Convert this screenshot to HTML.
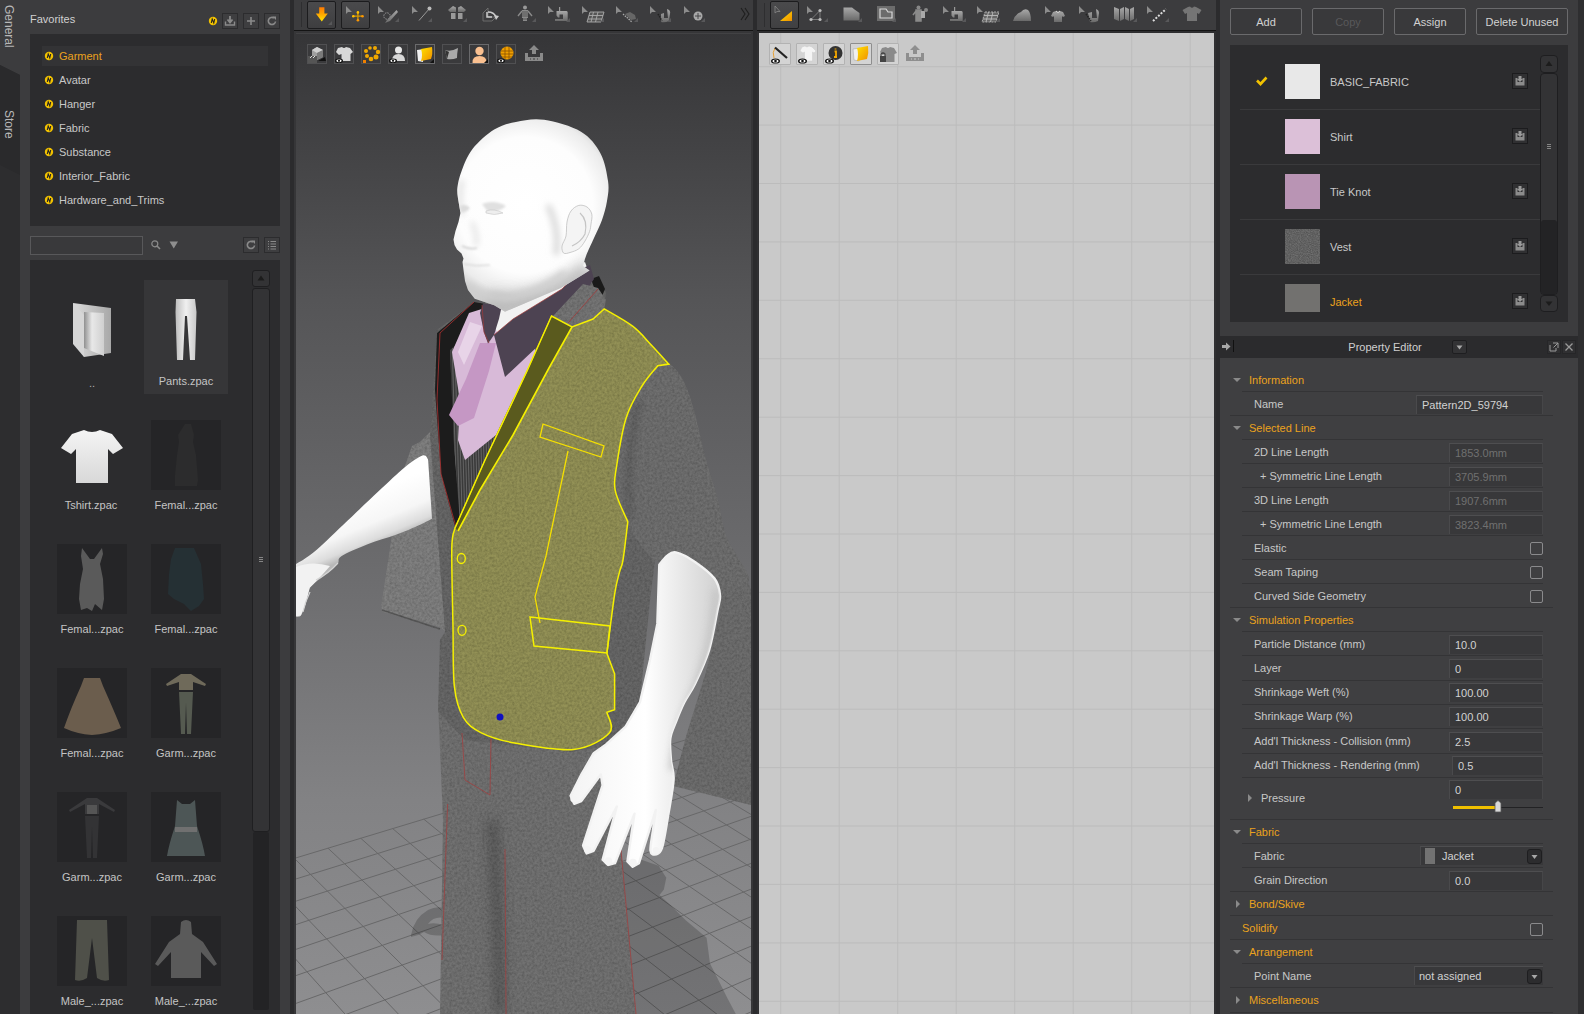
<!DOCTYPE html>
<html><head><meta charset="utf-8">
<style>
*{margin:0;padding:0;box-sizing:border-box}
html,body{width:1584px;height:1014px;overflow:hidden;background:#2e2e30;font-family:"Liberation Sans",sans-serif;font-size:11px;color:#cfcfcf}
.a{position:absolute}
.t{position:absolute;white-space:nowrap;line-height:13px}
svg{position:absolute;overflow:visible}
</style></head><body>
<div class="a" style="left:0px;top:0px;width:20px;height:1014px;background:#2d2d2f"></div>
<div class="a" style="left:20px;top:0px;width:270px;height:1014px;background:#3c3c3e"></div>
<div class="a" style="left:290px;top:0px;width:4px;height:1014px;background:#2b2b2d"></div>
<div class="a" style="left:294px;top:0px;width:459px;height:30px;background:#3c3c3e"></div>
<div class="a" style="left:294px;top:30px;width:459px;height:1px;background:#141414"></div>
<div class="a" style="left:294px;top:31px;width:459px;height:983px;background:#363638"></div>
<div class="a" style="left:753px;top:0px;width:4px;height:1014px;background:#2b2b2d"></div>
<div class="a" style="left:757px;top:0px;width:459px;height:30px;background:#3c3c3e"></div>
<div class="a" style="left:757px;top:30px;width:459px;height:1px;background:#141414"></div>
<div class="a" style="left:757px;top:33px;width:459px;height:981px;background:#303032"></div>
<div class="a" style="left:759px;top:33px;width:455px;height:981px;background:#c9c9c9"></div>
<div class="a" style="left:1216px;top:0px;width:4px;height:1014px;background:#2b2b2d"></div>
<div class="a" style="left:1220px;top:0px;width:364px;height:1014px;background:#3c3c3e"></div>
<svg style="left:0;top:0" width="20" height="1014"><polygon points="0,0 20,0 20,75 0,65" fill="#3c3c3e"/><polygon points="0,65 20,75 20,175 0,165" fill="#2a2a2c"/></svg>
<div class="t" style="left:2px;top:5px;color:#b8b8b8;font-size:12px;line-height:14px;writing-mode:vertical-rl">General</div>
<div class="t" style="left:2px;top:110px;color:#b8b8b8;font-size:12px;line-height:14px;writing-mode:vertical-rl">Store</div>
<div class="t" style="left:30px;top:13px;color:#d0d0d0;font-size:11px;">Favorites</div>
<svg style="left:208px;top:16px" width="10" height="10"><circle cx="5" cy="5" r="4.2" fill="#f2c200"/><path d="M3.3 7 L4.2 3 L5.8 7 L6.7 3" stroke="#222" stroke-width="1.1" fill="none"/></svg>
<div class="a" style="left:222px;top:13px;width:16px;height:16px;border:1px solid #2c2c2e;background:#3e3e40"></div>
<svg style="left:222px;top:13px" width="16" height="16"><path d="M8 3 V9 M5.5 6.5 L8 9.5 L10.5 6.5" stroke="#8a8a8a" stroke-width="1.8" fill="none"/><path d="M3.5 8.5 V12 H12.5 V8.5" stroke="#8a8a8a" stroke-width="1.4" fill="none"/></svg>
<div class="a" style="left:243px;top:13px;width:16px;height:16px;border:1px solid #2c2c2e;background:#3e3e40"></div>
<svg style="left:243px;top:13px" width="16" height="16"><path d="M8 4 V12 M4 8 H12" stroke="#8a8a8a" stroke-width="1.6"/></svg>
<div class="a" style="left:264px;top:13px;width:16px;height:16px;border:1px solid #2c2c2e;background:#3e3e40"></div>
<svg style="left:264px;top:13px" width="16" height="16"><path d="M11.5 8.5 A3.6 3.6 0 1 1 10 5" stroke="#8a8a8a" stroke-width="1.6" fill="none"/><path d="M8.5 3.5 L12 3.5 L12 7 Z" fill="#8a8a8a"/></svg>
<div class="a" style="left:30px;top:34px;width:250px;height:192px;background:#2c2c2e"></div>
<div class="a" style="left:42px;top:46px;width:226px;height:20px;background:#333335"></div>
<svg style="left:44px;top:51px" width="10" height="10"><circle cx="5" cy="5" r="4.2" fill="#f2c200"/><path d="M3.3 7 L4.2 3 L5.8 7 L6.7 3" stroke="#222" stroke-width="1.1" fill="none"/></svg>
<div class="t" style="left:59px;top:50px;color:#eba21d;font-size:11px;">Garment</div>
<svg style="left:44px;top:75px" width="10" height="10"><circle cx="5" cy="5" r="4.2" fill="#f2c200"/><path d="M3.3 7 L4.2 3 L5.8 7 L6.7 3" stroke="#222" stroke-width="1.1" fill="none"/></svg>
<div class="t" style="left:59px;top:74px;color:#c8c8c8;font-size:11px;">Avatar</div>
<svg style="left:44px;top:99px" width="10" height="10"><circle cx="5" cy="5" r="4.2" fill="#f2c200"/><path d="M3.3 7 L4.2 3 L5.8 7 L6.7 3" stroke="#222" stroke-width="1.1" fill="none"/></svg>
<div class="t" style="left:59px;top:98px;color:#c8c8c8;font-size:11px;">Hanger</div>
<svg style="left:44px;top:123px" width="10" height="10"><circle cx="5" cy="5" r="4.2" fill="#f2c200"/><path d="M3.3 7 L4.2 3 L5.8 7 L6.7 3" stroke="#222" stroke-width="1.1" fill="none"/></svg>
<div class="t" style="left:59px;top:122px;color:#c8c8c8;font-size:11px;">Fabric</div>
<svg style="left:44px;top:147px" width="10" height="10"><circle cx="5" cy="5" r="4.2" fill="#f2c200"/><path d="M3.3 7 L4.2 3 L5.8 7 L6.7 3" stroke="#222" stroke-width="1.1" fill="none"/></svg>
<div class="t" style="left:59px;top:146px;color:#c8c8c8;font-size:11px;">Substance</div>
<svg style="left:44px;top:171px" width="10" height="10"><circle cx="5" cy="5" r="4.2" fill="#f2c200"/><path d="M3.3 7 L4.2 3 L5.8 7 L6.7 3" stroke="#222" stroke-width="1.1" fill="none"/></svg>
<div class="t" style="left:59px;top:170px;color:#c8c8c8;font-size:11px;">Interior_Fabric</div>
<svg style="left:44px;top:195px" width="10" height="10"><circle cx="5" cy="5" r="4.2" fill="#f2c200"/><path d="M3.3 7 L4.2 3 L5.8 7 L6.7 3" stroke="#222" stroke-width="1.1" fill="none"/></svg>
<div class="t" style="left:59px;top:194px;color:#c8c8c8;font-size:11px;">Hardware_and_Trims</div>
<div class="a" style="left:30px;top:236px;width:113px;height:19px;background:#39393b;border:1px solid #58585a"></div>
<svg style="left:150px;top:239px" width="12" height="12"><circle cx="4.8" cy="4.8" r="3" stroke="#8a8a8a" stroke-width="1.2" fill="none"/><path d="M7 7 L10 10" stroke="#8a8a8a" stroke-width="1.6"/></svg>
<svg style="left:169px;top:240px" width="10" height="10"><polygon points="0.5,1.5 9,1.5 4.75,8.5" fill="#8e8e8e"/></svg>
<div class="a" style="left:243px;top:237px;width:16px;height:16px;border:1px solid #2c2c2e;background:#3e3e40"></div>
<svg style="left:243px;top:237px" width="16" height="16"><path d="M11.5 8.5 A3.6 3.6 0 1 1 10 5" stroke="#8a8a8a" stroke-width="1.6" fill="none"/><path d="M8.5 3.5 L12 3.5 L12 7 Z" fill="#8a8a8a"/></svg>
<div class="a" style="left:264px;top:237px;width:16px;height:16px;border:1px solid #2c2c2e;background:#3e3e40"></div>
<svg style="left:264px;top:237px" width="16" height="16"><path d="M4 4.5 H5 M6.5 4.5 H12 M4 7 H5 M6.5 7 H12 M4 9.5 H5 M6.5 9.5 H12 M4 12 H5 M6.5 12 H12" stroke="#8a8a8a" stroke-width="1.2"/></svg>
<div class="a" style="left:30px;top:260px;width:250px;height:754px;background:#2c2c2e"></div>
<div class="a" style="left:252px;top:270px;width:18px;height:17px;border:1px solid #1f1f21;border-radius:3px;background:#333335"></div>
<svg style="left:252px;top:270px" width="18" height="17"><polygon points="5.5,10.5 12.5,10.5 9,5.5" fill="#1c1c1c"/></svg>
<div class="a" style="left:252px;top:288px;width:18px;height:544px;border:1px solid #1f1f21;border-radius:3px;background:#333335"></div>
<div class="a" style="left:253px;top:832px;width:16px;height:178px;background:#232325;border-radius:2px"></div>
<svg style="left:252px;top:555px" width="18" height="10"><path d="M7 2.5 H11 M7 4.5 H11 M7 6.5 H11" stroke="#9a9a9a" stroke-width="0.8"/></svg>
<div class="a" style="left:144px;top:280px;width:84px;height:114px;background:#363638"></div>
<svg style="left:60px;top:296px" width="60" height="70">
<defs><linearGradient id="fg1" x1="0" x2="1"><stop offset="0" stop-color="#dcdcdc"/><stop offset="1" stop-color="#a8a8a8"/></linearGradient>
<linearGradient id="fg2" x1="0" x2="1"><stop offset="0" stop-color="#909090"/><stop offset="0.4" stop-color="#e8e8e8"/><stop offset="1" stop-color="#cfcfcf"/></linearGradient></defs>
<polygon points="13,7 51,12 51,57 24,61" fill="url(#fg1)"/>
<polygon points="24,16 44,17 44,60 24,52" fill="url(#fg2)"/>
<polygon points="13,7 24,19 24,61 13,48" fill="#d6d6d6"/>
</svg>
<div class="t" style="left:89px;top:377px;color:#b0b0b0;font-size:11px">..</div>
<svg style="left:174px;top:298px" width="24" height="66">
<defs><linearGradient id="pg" x1="0" x2="1"><stop offset="0" stop-color="#bdbdbd"/><stop offset="0.5" stop-color="#f0f0f0"/><stop offset="1" stop-color="#c8c8c8"/></linearGradient></defs>
<path d="M2 1 H21 L22.5 14 L21 62 H16 L13 18 H11 L9 62 H3 L1.5 14 Z" fill="url(#pg)"/></svg>
<div class="t" style="left:136.0px;top:375px;width:100px;text-align:center;color:#c4c4c4;font-size:11px;">Pants.zpac</div>
<svg style="left:60px;top:428px" width="64" height="56">
<defs><linearGradient id="tg" x1="0" x2="0" y1="0" y2="1"><stop offset="0" stop-color="#f4f4f4"/><stop offset="1" stop-color="#d8d8d8"/></linearGradient></defs>
<path d="M24 2 Q32 6 40 2 L52 6 L63 20 L53 26 L48 21 L48 55 H16 L16 21 L11 26 L1 20 L12 6 Z" fill="url(#tg)"/></svg>
<div class="t" style="left:41.0px;top:499px;width:100px;text-align:center;color:#c4c4c4;font-size:11px;">Tshirt.zpac</div>
<svg style="left:151px;top:420px" width="70" height="70"><rect width="70" height="70" fill="#252527"/><polygon points="34,4 40,4 43,15 42,22 45,35 47,60 46,66 24,66 24,55 26,35 28,22 27,15" fill="#2c2c2d"/></svg>
<div class="t" style="left:136.0px;top:499px;width:100px;text-align:center;color:#c4c4c4;font-size:11px;">Femal...zpac</div>
<svg style="left:57px;top:544px" width="70" height="70"><rect width="70" height="70" fill="#252527"/><polygon points="25,4 33,15 37,15 45,4 46,10 43,20 46,35 47,55 45,66 38,60 35,67 30,64 24,66 22,55 23,40 26,25 24,12" fill="#5a5a5a"/></svg>
<div class="t" style="left:42.0px;top:623px;width:100px;text-align:center;color:#c4c4c4;font-size:11px;">Femal...zpac</div>
<svg style="left:151px;top:544px" width="70" height="70"><rect width="70" height="70" fill="#252527"/><polygon points="24,4 43,4 50,20 52,40 53,55 48,62 40,67 33,60 23,55 17,50 18,30 20,15" fill="#253034"/></svg>
<div class="t" style="left:136.0px;top:623px;width:100px;text-align:center;color:#c4c4c4;font-size:11px;">Femal...zpac</div>
<svg style="left:57px;top:668px" width="70" height="70"><rect width="70" height="70" fill="#252527"/><path d="M27 10 H43 L46 18 Q58 45 64 60 Q50 66 35 67 Q20 66 7 60 Q14 40 24 18 Z" fill="#6b5d4d"/></svg>
<div class="t" style="left:42.0px;top:747px;width:100px;text-align:center;color:#c4c4c4;font-size:11px;">Femal...zpac</div>
<svg style="left:151px;top:668px" width="70" height="70"><rect width="70" height="70" fill="#252527"/><path d="M30 6 H40 L55 16 L54 18 L42 14 V22 H28 V14 L16 18 L15 16 Z" fill="#6f6a5a"/><path d="M28 24 H42 L40 66 H36 L35 35 L34 66 H30 Z" fill="#555a50"/></svg>
<div class="t" style="left:136.0px;top:747px;width:100px;text-align:center;color:#c4c4c4;font-size:11px;">Garm...zpac</div>
<svg style="left:57px;top:792px" width="70" height="70"><rect width="70" height="70" fill="#252527"/><path d="M30 6 H40 L58 18 L57 20 L42 12 V22 H28 V12 L13 20 L12 18 Z" fill="#3a3a3c"/><path d="M30 13 H40 V22 H30 Z" fill="#555"/><path d="M28 24 H42 L40 66 H36 L35 35 L34 66 H30 Z" fill="#333335"/></svg>
<div class="t" style="left:42.0px;top:871px;width:100px;text-align:center;color:#c4c4c4;font-size:11px;">Garm...zpac</div>
<svg style="left:151px;top:792px" width="70" height="70"><rect width="70" height="70" fill="#252527"/><path d="M26 8 L31 12 H39 L44 8 L46 34 Q52 52 54 64 H16 Q18 52 24 34 Z" fill="#4d5656"/><rect x="24" y="35" width="22" height="5" fill="#707070"/></svg>
<div class="t" style="left:136.0px;top:871px;width:100px;text-align:center;color:#c4c4c4;font-size:11px;">Garm...zpac</div>
<svg style="left:57px;top:916px" width="70" height="70"><rect width="70" height="70" fill="#252527"/><path d="M20 4 H50 L52 64 Q46 66 40 62 L35 22 L30 62 Q24 66 18 64 Z" fill="#4f5049"/></svg>
<div class="t" style="left:42.0px;top:995px;width:100px;text-align:center;color:#c4c4c4;font-size:11px;">Male_...zpac</div>
<svg style="left:151px;top:916px" width="70" height="70"><rect width="70" height="70" fill="#252527"/><path d="M30 6 Q35 2 40 6 L41 18 L52 26 L66 48 L63 50 L50 36 L50 62 H20 L20 36 L7 50 L4 48 L18 26 L29 18 Z" fill="#5a5a5a"/></svg>
<div class="t" style="left:136.0px;top:995px;width:100px;text-align:center;color:#c4c4c4;font-size:11px;">Male_...zpac</div>
<svg style="left:294px;top:31px" width="459" height="983" viewBox="294 31 459 983"><defs><linearGradient id="vbg" x1="0" y1="31" x2="0" y2="1014" gradientUnits="userSpaceOnUse"><stop offset="0" stop-color="#353537"/><stop offset="0.274" stop-color="#555557"/><stop offset="0.528" stop-color="#6a6a6c"/><stop offset="0.782" stop-color="#828284"/><stop offset="1" stop-color="#8e8e90"/></linearGradient><radialGradient id="skin" cx="0.45" cy="0.35" r="0.7"><stop offset="0" stop-color="#ffffff"/><stop offset="0.6" stop-color="#f2f2f2"/><stop offset="1" stop-color="#c8c8c8"/></radialGradient><linearGradient id="armL" x1="0" y1="0" x2="0.3" y2="1"><stop offset="0" stop-color="#ffffff"/><stop offset="0.6" stop-color="#f0f0f0"/><stop offset="1" stop-color="#bdbdbd"/></linearGradient><linearGradient id="armR" x1="0" y1="0" x2="1" y2="0"><stop offset="0" stop-color="#f4f4f4"/><stop offset="0.5" stop-color="#ffffff"/><stop offset="1" stop-color="#d0d0d0"/></linearGradient><filter id="noise" x="0" y="0" width="100%" height="100%"><feTurbulence type="fractalNoise" baseFrequency="0.9" numOctaves="2" seed="3"/><feColorMatrix type="matrix" values="0 0 0 0 0  0 0 0 0 0  0 0 0 0 0  0 0 0 -1.6 1.1"/><feComposite operator="in" in2="SourceGraphic"/></filter><clipPath id="vpclip"><rect x="296" y="33" width="455" height="981"/></clipPath><filter id="fab" x="294" y="31" width="459" height="983" filterUnits="userSpaceOnUse"><feTurbulence type="fractalNoise" baseFrequency="0.4" numOctaves="3" seed="5" result="n"/><feColorMatrix in="n" type="matrix" values="0 0 0 0 0  0 0 0 0 0  0 0 0 0 0  0 0 0 0.6 -0.18" result="na"/><feComposite in="na" in2="SourceGraphic" operator="in" result="nc"/><feMerge><feMergeNode in="SourceGraphic"/><feMergeNode in="nc"/></feMerge></filter></defs><g clip-path="url(#vpclip)"><rect x="294" y="31" width="459" height="983" fill="url(#vbg)"/><rect x="296" y="33" width="455" height="1" fill="#424244"/><path d="M-147.1 992.1L352.6 2258.4M-100.6 978.1L441.5 2180.0M-55.6 964.4L524.1 2107.1M-12.0 951.2L601.2 2039.2M30.3 938.4L673.2 1975.7M71.4 925.9L740.6 1916.2M111.3 913.9L803.9 1860.4M150.0 902.1L863.4 1807.9M187.6 890.7L919.5 1758.4M224.2 879.7L972.4 1711.7M259.8 868.9L1022.4 1667.6M294.4 858.4L1069.8 1625.9M328.0 848.2L1114.7 1586.3M360.8 838.3L1157.3 1548.7M392.7 828.6L1197.9 1512.9M423.8 819.2L1236.4 1478.9M454.1 810.0L1273.2 1446.5M483.6 801.1L1308.3 1415.5M512.4 792.4L1341.8 1386.0M540.5 783.8L1373.8 1357.7M567.9 775.5L1404.5 1330.7M594.7 767.4L1433.8 1304.8M620.8 759.5L1462.0 1280.0M646.3 751.8L1489.0 1256.1M671.2 744.3L1514.9 1233.2M695.6 736.9L1539.9 1211.3M719.4 729.7L1563.9 1190.1M742.7 722.6L1587.0 1169.7M765.4 715.7L1609.2 1150.1M787.7 709.0L1630.7 1131.2M809.4 702.4L1651.4 1112.9M830.8 695.9L1671.3 1095.3M851.6 689.6L1690.6 1078.3M872.0 683.4L1709.3 1061.9M892.0 677.4L1727.3 1046.0M911.6 671.4L1744.7 1030.6M930.8 665.6L1761.6 1015.7M949.6 659.9L1778.0 1001.3M968.0 654.4L1793.8 987.3M986.1 648.9L1809.2 973.7M1003.8 643.5L1824.1 960.6M1021.2 638.3L1838.5 947.9M-147.1 992.1L1038.2 633.1M-138.4 1014.2L1059.9 641.1M-129.3 1037.3L1082.2 649.4M-119.7 1061.5L1105.1 657.9M-109.7 1087.0L1128.7 666.7M-99.1 1113.8L1153.0 675.7M-88.0 1142.0L1178.0 685.0M-76.2 1171.8L1203.8 694.6M-63.8 1203.2L1230.4 704.4M-50.7 1236.5L1257.8 714.6M-36.7 1271.7L1286.1 725.1M-22.0 1309.2L1315.3 736.0M-6.3 1349.0L1345.4 747.2M10.5 1391.4L1376.6 758.7M28.4 1436.7L1408.8 770.7M47.5 1485.2L1442.2 783.1M68.0 1537.2L1476.7 795.9M90.1 1593.1L1512.5 809.2M113.9 1653.4L1549.6 823.0M139.6 1718.7L1588.0 837.2M167.6 1789.5L1627.9 852.1M198.0 1866.6L1669.4 867.5M231.3 1950.9L1712.5 883.5M267.8 2043.4L1757.3 900.1M308.0 2145.4L1803.9 917.4M352.6 2258.4L1852.6 935.5" stroke="#686869" stroke-width="1" fill="none"/><path d="M411 935 Q414 918 428 910 Q436 906 444 908 L444 918 Q434 916 428 924 Q434 922 444 925 L444 935 Q432 937 424 932 Q418 936 411 937 Z" fill="rgba(0,0,0,0.19)"/><path d="M621.7 862.3 L641.5 859.7 L658.6 865.7 L666.3 877.7 L663.8 889.7 L659.5 894.9 L670.6 905.2 L686 920.6 L706.6 937.8 L710 963.5 L717 977.2 L727.2 997.8 L735.8 1014 L636 1014 Z" fill="rgba(0,0,0,0.19)"/><g filter="url(#fab)"><path d="M700 566 L745 574 L751 590 L751 805 L673 786 L687 733 L706 672 L720 612 L716 585 Z" fill="#6e6e6e"/><path d="M412 446 L420 442 L432 430 L446 440 L446 632 L440 627 L383 612 L381 607 L392 535 L400 480 Z" fill="#808080"/><path d="M382 610 L440 629" stroke="#5a5a5a" stroke-width="1.5"/><path d="M438 700 L617 712 L621 848 L636 1014 L440 1014 L443 820 Z" fill="#727272"/><path d="M492 820 Q498 900 500 1014" stroke="#3a3a3a" stroke-width="10" fill="none" filter="url(#blur6)" opacity="0.5"/><path d="M430 436 L437 330 L474 302 L485 303 L562 288 L585 282 L594 282 L606 292 L604 309 L633 326 L652 345 L669 364 L655 368 L636 392 L621 437 L617 465 L617 493 L626 522 L655 560 L650 600 L640 700 L630 735 L614 745 L570 752 L465 740 L438 712 L440 640 L445 632 Z" fill="#686868"/><path d="M669.0 364.0C673.7 366.0 678.8 372.3 683.0 380.0C687.2 387.7 690.3 397.3 694.0 410.0C697.7 422.7 701.0 441.0 705.0 456.0C709.0 471.0 714.3 486.3 718.0 500.0C721.7 513.7 721.8 524.7 727.0 538.0C732.2 551.3 750.2 572.2 749.0 580.0C747.8 587.8 729.8 588.0 720.0 585.0C710.2 582.0 700.8 566.2 690.0 562.0C679.2 557.8 665.7 566.7 655.0 560.0C644.3 553.3 632.3 533.2 626.0 522.0C619.7 510.8 618.5 502.5 617.0 493.0C615.5 483.5 616.3 474.3 617.0 465.0C617.7 455.7 617.8 449.2 621.0 437.0C624.2 424.8 630.3 403.5 636.0 392.0C641.7 380.5 649.5 372.7 655.0 368.0C660.5 363.3 664.3 362.0 669.0 364.0Z" fill="#707070"/><path d="M640 400 Q625 450 630 520" stroke="#5a5a5a" stroke-width="8" fill="none" filter="url(#blur3)" opacity="0.6"/></g><path d="M462 733 L465 780 L490 795 L491 738 M447.6 804 L442 960 M505 849 L506 1014 M621 850 L636 1014" stroke="#a04040" stroke-width="0.8" fill="none"/><path d="M591 279 L599 276 L605 289 L602 296 L596 293 Z" fill="#1a1a1a"/><path d="M437 333 L474 302 L486 304 L462 332 L452 352 L454 446 L461 520 L456 530 L441 474 L435 390 Z" fill="#1c1c1c"/><path d="M474 302 L440 333 L437 400 L441 474 L456 527" stroke="#b03030" stroke-width="0.8" fill="none"/><clipPath id="stripeclip"><path d="M450 350 L462 340 L466 460 L513 399 L485 460 L460 523 L454 446 Z"/></clipPath><path d="M450 350 L462 340 L466 460 L513 399 L485 460 L460 523 L454 446 Z" fill="#3a3a3a"/><path d="M447.0 345L452.0 525M449.6 345L454.6 525M452.2 345L457.2 525M454.8 345L459.8 525M457.4 345L462.4 525M460.0 345L465.0 525M462.6 345L467.6 525M465.2 345L470.2 525M467.8 345L472.8 525M470.4 345L475.4 525M473.0 345L478.0 525M475.6 345L480.6 525M478.2 345L483.2 525M480.8 345L485.8 525M483.4 345L488.4 525M486.0 345L491.0 525M488.6 345L493.6 525M491.2 345L496.2 525M493.8 345L498.8 525M496.4 345L501.4 525M499.0 345L504.0 525M501.6 345L506.6 525M504.2 345L509.2 525M506.8 345L511.8 525M509.4 345L514.4 525M512.0 345L517.0 525" stroke="#9a9a9a" stroke-width="0.6" opacity="0.75" clip-path="url(#stripeclip)"/><path d="M452 352 L469 313 L485 308 L494 327 L535 349 L538 357 L513 399 L496 435 L465 460 L458 440 L460 400 Z" fill="#d8bad8"/><path d="M458 352 L470 322 L482 326 L464 365 Z" fill="#e8d4e8"/><path d="M480 343 L496 343 L489 371 L474 418 L458 426 L449 415 L466 379 Z" fill="#c597c4"/><path d="M495 300 L585 262 L592 282 L560 300 L520 330 L500 340 L492 320 Z" fill="#f2f2f2"/><path d="M483 303.5 L502 305 L499 318.7 L494 335 L488 343.5 L484 332.5 L480 313 Z" fill="#4d4352"/><path d="M482 305 L484 332 L489 343" stroke="#a03838" stroke-width="0.7" fill="none"/><path d="M494 335 L513 319 L562 289 L583 268 L590 265 L594 279 L588 288 L555 315 L538 346 L505 377 Z" fill="#4d4352"/><path d="M553 316 L583 284 L598 288 L606 300 L604 309 L593 319 L572 327 Z" fill="#767676" filter="url(#fab)"/><path d="M568 323 L598 289" stroke="#a03838" stroke-width="0.8"/><path d="M494 335 L513 319 L562 289 L583 268" stroke="#a03838" stroke-width="0.7" fill="none"/><g filter="url(#fab)"><path d="M551.5 316 L572 327 L593 319 L604.2 308.9 C608.9 311.8 624.7 320.1 632.6 326.2C640.5 332.2 645.5 338.9 651.5 345.2C657.5 351.5 665.9 361.0 668.8 364.1 L657.8 365.7 C655.2 369.1 647.3 377.3 642.0 386.0C636.7 394.7 630.4 404.5 626.2 417.7C622.0 430.9 618.6 452.9 616.8 465.0C615.0 477.1 613.4 480.8 615.2 490.3C617.0 499.8 625.7 516.5 627.8 521.8 C627.0 528.2 624.4 551.8 623.0 560.0C621.6 568.2 621.1 565.6 619.7 571.3C618.3 577.0 616.7 580.7 614.6 594.4C612.5 608.1 608.2 643.5 606.9 653.3 L614.6 673.8 L614.6 709.7 L606.9 712.3 C607.3 715.7 615.0 726.6 609.5 732.8C604.0 739.0 589.4 747.8 573.6 749.5C557.8 751.2 530.0 745.8 514.6 743.0C499.2 740.2 489.9 737.1 481.3 732.8C472.8 728.5 467.8 725.1 463.3 717.4C458.8 709.7 456.1 701.7 454.4 686.7C452.7 671.8 453.4 650.8 453.0 627.7C452.6 604.6 451.5 564.8 451.8 548.2C452.1 531.6 454.5 531.4 455.0 528.0 L485 460 L527 371 Z" fill="#939157"/></g><path d="M551.5 316 L572 327 L549 368 L513 435 L480 490 L458 531 L455 528 L485 460 L527 371 Z" fill="#5a5a1e"/><path d="M551.5 316 L527 371 L485 460 L455 528" stroke="#d8d000" stroke-width="0.8" fill="none"/><path d="M572 327 L549 368 L513 435 L480 490 L458 531" stroke="#f5f000" stroke-width="1.6" fill="none"/><path d="M551.5 316 L572 327 L593 319 L604.2 308.9 C608.9 311.8 624.7 320.1 632.6 326.2C640.5 332.2 645.5 338.9 651.5 345.2C657.5 351.5 665.9 361.0 668.8 364.1 L657.8 365.7 C655.2 369.1 647.3 377.3 642.0 386.0C636.7 394.7 630.4 404.5 626.2 417.7C622.0 430.9 618.6 452.9 616.8 465.0C615.0 477.1 613.4 480.8 615.2 490.3C617.0 499.8 625.7 516.5 627.8 521.8 C627.0 528.2 624.4 551.8 623.0 560.0C621.6 568.2 621.1 565.6 619.7 571.3C618.3 577.0 616.7 580.7 614.6 594.4C612.5 608.1 608.2 643.5 606.9 653.3 L614.6 673.8 L614.6 709.7 L606.9 712.3 C607.3 715.7 615.0 726.6 609.5 732.8C604.0 739.0 589.4 747.8 573.6 749.5C557.8 751.2 530.0 745.8 514.6 743.0C499.2 740.2 489.9 737.1 481.3 732.8C472.8 728.5 467.8 725.1 463.3 717.4C458.8 709.7 456.1 701.7 454.4 686.7C452.7 671.8 453.4 650.8 453.0 627.7C452.6 604.6 451.5 564.8 451.8 548.2C452.1 531.6 454.5 531.4 455.0 528.0 L485 460 L527 371 Z" stroke="#f5f000" stroke-width="1.5" fill="none"/><path d="M543 424 L604 446 L601 457 L540 437 Z" stroke="#f5e000" stroke-width="1.3" fill="none"/><path d="M568 451 L546 556 L535 597 L540 623" stroke="#f5e000" stroke-width="1.3" fill="none"/><path d="M530 617 L610 626 L607 653 L534 646 Z" stroke="#f5f000" stroke-width="1.5" fill="none"/><ellipse cx="461.3" cy="558.5" rx="4" ry="5" stroke="#f5f000" stroke-width="1.3" fill="none"/><ellipse cx="462" cy="630.3" rx="4" ry="5" stroke="#f5f000" stroke-width="1.3" fill="none"/><circle cx="500" cy="717" r="3.5" fill="#1010c0"/><radialGradient id="headg" gradientUnits="userSpaceOnUse" cx="525" cy="205" r="100"><stop offset="0" stop-color="#ffffff"/><stop offset="0.68" stop-color="#fdfdfd"/><stop offset="0.88" stop-color="#ececec"/><stop offset="1" stop-color="#cfcfcf"/></radialGradient><filter id="blur3" filterUnits="userSpaceOnUse" x="294" y="31" width="459" height="983"><feGaussianBlur stdDeviation="3"/></filter><filter id="blur6" filterUnits="userSpaceOnUse" x="294" y="31" width="459" height="983"><feGaussianBlur stdDeviation="6"/></filter><clipPath id="headclip"><path d="M458.4 201.1C458.2 198.9 456.8 193.2 457.4 188.1C457.9 183.0 459.2 177.2 461.7 170.7C464.2 164.2 467.1 155.9 472.5 149.0C477.9 142.1 487.0 134.0 494.2 129.5C501.4 125.0 507.6 123.5 515.9 121.9C524.2 120.3 533.2 118.2 544.1 119.8C555.0 121.4 571.6 126.1 581.0 131.7C590.4 137.3 596.0 145.1 600.5 153.4C605.0 161.7 607.0 173.7 608.1 181.6C609.2 189.5 608.0 194.6 607.0 201.0C606.0 207.4 604.2 213.8 602.0 220.0C599.8 226.2 596.7 232.0 594.0 238.0C591.3 244.0 587.8 251.3 586.0 256.0C584.2 260.7 583.6 264.4 583.1 266.1L589.6 270.5L561.4 287.8L505.0 311.7L494.2 305.2L474.7 298.7L468.0 290.0L465.0 281.0L463.5 270.0L462.5 262.0L463.5 258.5L461.5 253.5L457.0 249.5L454.5 245.0L453.5 239.5L455.5 231.0L458.5 222.0L460.5 213.0L458.4 201.1Z"/></clipPath><path d="M458.4 201.1C458.2 198.9 456.8 193.2 457.4 188.1C457.9 183.0 459.2 177.2 461.7 170.7C464.2 164.2 467.1 155.9 472.5 149.0C477.9 142.1 487.0 134.0 494.2 129.5C501.4 125.0 507.6 123.5 515.9 121.9C524.2 120.3 533.2 118.2 544.1 119.8C555.0 121.4 571.6 126.1 581.0 131.7C590.4 137.3 596.0 145.1 600.5 153.4C605.0 161.7 607.0 173.7 608.1 181.6C609.2 189.5 608.0 194.6 607.0 201.0C606.0 207.4 604.2 213.8 602.0 220.0C599.8 226.2 596.7 232.0 594.0 238.0C591.3 244.0 587.8 251.3 586.0 256.0C584.2 260.7 583.6 264.4 583.1 266.1L589.6 270.5L561.4 287.8L505.0 311.7L494.2 305.2L474.7 298.7L468.0 290.0L465.0 281.0L463.5 270.0L462.5 262.0L463.5 258.5L461.5 253.5L457.0 249.5L454.5 245.0L453.5 239.5L455.5 231.0L458.5 222.0L460.5 213.0L458.4 201.1Z" fill="url(#headg)"/><g clip-path="url(#headclip)"><path d="M490 290 Q530 300 585 262 L600 300 L480 320 Z" fill="#b8b8b8" filter="url(#blur6)" opacity="0.8"/><filter id="blur1" filterUnits="userSpaceOnUse" x="294" y="31" width="459" height="983"><feGaussianBlur stdDeviation="1.2"/></filter><path d="M482 204 Q494 199 506 206 Q500 212 488 212 Z" fill="#e0e0e0" filter="url(#blur1)"/><path d="M486 211 Q494 208 503 213 Q494 216 486 213 Z" fill="#eeeeee" stroke="#c8c8c8" stroke-width="0.6"/><path d="M460 206 Q466 203 470 208 Q466 213 461 212 Z" fill="#dddddd" filter="url(#blur1)"/><path d="M462 246 Q470 250 477 248" stroke="#cdcdcd" stroke-width="1.6" fill="none" filter="url(#blur1)"/><path d="M472 222 Q478 236 476 246" stroke="#d8d8d8" stroke-width="3" fill="none" filter="url(#blur3)"/><path d="M464 264 Q476 267 490 265" stroke="#cccccc" stroke-width="1" fill="none" filter="url(#blur1)"/><path d="M468 284 Q485 300 510 298 Q540 292 565 272" stroke="#cfcfcf" stroke-width="6" fill="none" filter="url(#blur3)"/><path d="M548 205 Q560 230 556 255" stroke="#dadada" stroke-width="6" fill="none" filter="url(#blur3)"/><path d="M462 180 Q458 200 462 215" stroke="#dcdcdc" stroke-width="4" fill="none" filter="url(#blur3)"/></g><path d="M578.8 205.4C581.5 204.7 584.8 205.6 587.0 207.0C589.2 208.4 591.1 211.3 591.8 214.1C592.5 216.9 591.4 221.1 591.0 224.0C590.6 226.9 590.6 228.6 589.6 231.4C588.6 234.2 586.8 238.1 585.0 241.0C583.2 243.9 581.3 246.9 578.8 248.8C576.3 250.7 572.5 251.8 570.0 252.5C567.5 253.2 564.9 254.2 563.6 253.1C562.3 252.0 561.6 248.8 562.0 246.0C562.4 243.2 565.2 240.0 566.0 236.0C566.8 232.0 566.2 226.2 567.0 222.0C567.8 217.8 569.0 213.8 571.0 211.0C573.0 208.2 576.1 206.1 578.8 205.4Z" fill="#f4f4f4" stroke="#c0c0c0" stroke-width="0.8"/><path d="M580 213 Q588 220 585 234 Q581 242 572 246" stroke="#c4c4c4" stroke-width="1.2" fill="none"/><linearGradient id="armLg" gradientUnits="userSpaceOnUse" x1="372" y1="492" x2="392" y2="540"><stop offset="0" stop-color="#ffffff"/><stop offset="0.55" stop-color="#f6f6f6"/><stop offset="0.85" stop-color="#dcdcdc"/><stop offset="1" stop-color="#b8b8b8"/></linearGradient><path d="M296.0 564.1C298.9 562.1 305.8 558.9 313.7 552.3C321.6 545.7 332.4 534.9 343.3 524.7C354.2 514.5 368.6 500.6 378.8 491.1C389.0 481.6 397.6 473.2 404.5 467.5C411.4 461.8 416.8 458.6 420.2 456.6C423.6 454.6 423.9 455.1 425.2 455.6C426.5 456.1 427.6 458.9 428.1 459.6L432 518.8 C430.0 519.8 426.1 522.1 420.2 524.7C414.3 527.3 405.5 531.2 396.6 534.5C387.7 537.8 376.2 540.8 367.0 544.4C357.8 548.0 346.2 552.9 341.3 556.2C336.4 559.5 340.3 560.8 337.4 564.1C334.4 567.4 328.2 572.0 323.6 576.0C319.0 580.0 312.8 583.2 309.8 587.8C306.8 592.4 307.3 599.0 305.8 603.6C304.3 608.2 302.4 613.3 300.9 615.4C299.4 617.5 298.1 616.3 297.0 616.4C295.9 616.5 294.5 616.1 294.0 616.0L294 564Z" fill="url(#armLg)"/><path d="M294 568 Q310 560 330 566 Q318 580 309.8 587.8 L305.8 603.6 L300.9 615.4 L297 616.4 L294 616 Z" fill="#f2f2f2"/><path d="M338 563 Q328 574 316 580 M310 592 Q305 602 303 612" stroke="#d4d4d4" stroke-width="1.2" fill="none"/><path d="M659.3 564.8C660.6 563.3 664.2 558.1 667.0 556.0C669.8 553.9 671.2 551.4 675.9 552.4C680.6 553.4 688.6 557.6 695.0 562.0C701.4 566.4 710.3 573.1 714.5 578.6C718.7 584.1 719.5 589.7 720.0 595.2C720.5 600.7 719.0 602.5 717.2 611.7C715.4 620.9 712.7 638.3 709.0 650.3C705.3 662.2 699.4 674.6 695.2 683.4C691.0 692.2 687.2 696.6 684.0 703.0C680.8 709.4 678.2 716.1 675.9 722.0C673.6 727.9 671.1 732.3 670.3 738.6C669.5 744.9 670.5 753.1 671.0 760.0C671.5 766.9 674.1 770.6 673.6 779.8C673.1 789.0 670.1 803.9 668.2 815.3C666.3 826.7 664.1 841.5 662.0 848.0C659.9 854.5 657.7 853.9 655.8 854.4C653.9 854.9 651.0 854.9 650.5 850.8C650.0 846.7 652.1 836.8 653.0 830.0C653.9 823.2 655.3 813.3 655.8 810.0L655.8 810.0L639.0 863.2L632.7 866.8L627.4 861.5L634.5 813.6L615.0 863.2L607.9 865.0L602.6 859.7L616.8 806.5L593.7 850.8L586.6 853.5L583.0 845.5L602.6 785.2L600.8 774.5L581.3 801.1L574.2 803.8L570.6 795.8L581.3 774.5L593.7 753.2L606.1 744.4L625.6 726.6L640.0 702.0L650.0 660.0L657.3 623.9Z" fill="url(#armR)" stroke="#f2f2f2" stroke-width="2.4" stroke-linejoin="round"/><circle cx="587.5" cy="849.5" r="3.6" fill="#f4f4f4"/><circle cx="608.5" cy="861" r="3.8" fill="#f4f4f4"/><circle cx="633" cy="862.5" r="3.8" fill="#f4f4f4"/><circle cx="656" cy="850.5" r="3.4" fill="#f4f4f4"/><circle cx="573.5" cy="799" r="3.2" fill="#f4f4f4"/><clipPath id="armclip"><path d="M659.3 564.8C660.6 563.3 664.2 558.1 667.0 556.0C669.8 553.9 671.2 551.4 675.9 552.4C680.6 553.4 688.6 557.6 695.0 562.0C701.4 566.4 710.3 573.1 714.5 578.6C718.7 584.1 719.5 589.7 720.0 595.2C720.5 600.7 719.0 602.5 717.2 611.7C715.4 620.9 712.7 638.3 709.0 650.3C705.3 662.2 699.4 674.6 695.2 683.4C691.0 692.2 687.2 696.6 684.0 703.0C680.8 709.4 678.2 716.1 675.9 722.0C673.6 727.9 671.1 732.3 670.3 738.6C669.5 744.9 670.5 753.1 671.0 760.0C671.5 766.9 674.1 770.6 673.6 779.8C673.1 789.0 670.1 803.9 668.2 815.3C666.3 826.7 664.1 841.5 662.0 848.0C659.9 854.5 657.7 853.9 655.8 854.4C653.9 854.9 651.0 854.9 650.5 850.8C650.0 846.7 652.1 836.8 653.0 830.0C653.9 823.2 655.3 813.3 655.8 810.0L655.8 810.0L639.0 863.2L632.7 866.8L627.4 861.5L634.5 813.6L615.0 863.2L607.9 865.0L602.6 859.7L616.8 806.5L593.7 850.8L586.6 853.5L583.0 845.5L602.6 785.2L600.8 774.5L581.3 801.1L574.2 803.8L570.6 795.8L581.3 774.5L593.7 753.2L606.1 744.4L625.6 726.6L640.0 702.0L650.0 660.0L657.3 623.9Z"/></clipPath><path d="M716 590 Q712 650 690 700 Q675 730 672 770" stroke="#c4c4c4" stroke-width="7" fill="none" filter="url(#blur3)" opacity="0.8" clip-path="url(#armclip)"/></g></svg>
<div class="a" style="left:301px;top:2px;width:1px;height:25px;background:#2e2e30"></div>
<div class="a" style="left:307px;top:1px;width:29px;height:28px;border:1px solid #1c1c1e;border-radius:2px;background:linear-gradient(#4a4a4c,#3e3e40)"></div>
<div class="a" style="left:341px;top:1px;width:29px;height:28px;border:1px solid #1c1c1e;border-radius:2px;background:linear-gradient(#4a4a4c,#3e3e40)"></div>
<svg style="left:313px;top:6px" width="18" height="18"><defs><linearGradient id="arrg" x1="0" y1="0" x2="0" y2="1"><stop offset="0" stop-color="#ff7a00"/><stop offset="0.5" stop-color="#ffa800"/><stop offset="1" stop-color="#ffe400"/></linearGradient></defs><path d="M6.2 1.3 H11.4 V7.5 H14.8 L8.8 15.4 L2.8 7.5 H6.2 Z" fill="url(#arrg)"/></svg>
<svg style="left:328px;top:21px" width="5" height="5"><polygon points="4,0 4,4 0,4" fill="#58585a"/></svg>
<svg style="left:344px;top:4px" width="24" height="22"><polygon points="2,2 2,10 4,8 8,8" fill="#8c8c8c"/><path d="M13.9 8.2 V16.5 M9 12.2 H18.8" stroke="#d89a00" stroke-width="1.3"/><circle cx="13.9" cy="8.4" r="1.3" fill="#ffc000"/><circle cx="13.9" cy="16.2" r="1.3" fill="#ff9800"/><circle cx="9.3" cy="12.2" r="1.3" fill="#ffc000"/><circle cx="18.5" cy="12.2" r="1.3" fill="#ff9800"/></svg>
<svg style="left:377px;top:5px" width="24" height="18"><polygon points="1,1 1,9 3,7 7,7" fill="#8c8c8c"/><circle cx="10" cy="11" r="3.2" stroke="#999" stroke-dasharray="1.5 1" fill="none"/><path d="M10 15 L19.5 5 L21 7 L13 16 L8 18 Z" fill="url(#gg)"/></svg>
<svg style="left:395px;top:18px" width="5" height="5"><polygon points="4,0 4,4 0,4" fill="#58585a"/></svg>
<svg style="left:411px;top:5px" width="22" height="17"><polygon points="1,1 1,9 3,7 7,7" fill="#8c8c8c"/><path d="M8 15.5 L18.5 3.5" stroke="#999" stroke-width="1"/><circle cx="18.5" cy="3.5" r="2" fill="#bbb"/></svg>
<svg style="left:428px;top:18px" width="5" height="5"><polygon points="4,0 4,4 0,4" fill="#58585a"/></svg>
<svg style="left:447px;top:5px" width="20" height="16"><path d="M6 1 L9 2.5 V7 H3 L1 5 Z M11 2.5 L14 1 L19 5 L17 7 H11 Z" fill="url(#gg)"/><rect x="4" y="8" width="4.5" height="6" fill="#9a9a9a"/><rect x="11" y="8" width="4.5" height="6" fill="#9a9a9a"/></svg>
<svg style="left:463px;top:18px" width="5" height="5"><polygon points="4,0 4,4 0,4" fill="#58585a"/></svg>
<svg style="left:482px;top:6px" width="20" height="16"><path d="M1 7 L6 2 V11 H14 L10 15 H1 Z" stroke="#777" stroke-width="0.8" fill="none"/><path d="M5 6 V11 H10" stroke="#ccc" stroke-width="1.5" fill="none"/><path d="M6 6 Q12 6 14 11" stroke="#ccc" stroke-width="1.4" fill="none"/><polygon points="12,9 17,10 14,14" fill="#ccc"/></svg>
<svg style="left:517px;top:5px" width="16" height="17"><circle cx="8" cy="2.5" r="2" fill="#999"/><path d="M5 5 H11 V13 H10 V16 H6 V13 H5 Z" fill="#8a8a8a"/><path d="M5 6 L1 11 M11 6 L15 11" stroke="#8a8a8a" stroke-width="1.4"/><path d="M5 7 H11 M5 9 H11 M5 11 H11 M6 14 H10" stroke="#3c3c3e" stroke-width="0.7"/></svg>
<svg style="left:532px;top:18px" width="5" height="5"><polygon points="4,0 4,4 0,4" fill="#58585a"/></svg>
<svg style="left:547px;top:5px" width="24" height="18"><polygon points="1,1 1,9 3,7 7,7" fill="#8c8c8c"/><path d="M9.5 6 H19.5 Q20.7 6 20.7 7.5 V16 H8 V14 H16 V9.5 H12.5 V12.5 H11 L9.5 10.5 Z" fill="url(#gg)"/><rect x="12" y="2" width="1.2" height="4" fill="#999"/></svg>
<svg style="left:566px;top:18px" width="5" height="5"><polygon points="4,0 4,4 0,4" fill="#58585a"/></svg>
<svg style="left:581px;top:5px" width="24" height="18"><polygon points="1,1 1,9 3,7 7,7" fill="#8c8c8c"/><path d="M9 7 L23 7 L20 17 L6 17 Z" fill="#555"/><path d="M9 7 L23 7 L20 17 L6 17 Z M8 10.5 H22 M7 14 H21 M12.5 7 L10 17 M17 7 L14.5 17" stroke="#aaa" stroke-width="0.9" fill="none"/></svg>
<svg style="left:600px;top:18px" width="5" height="5"><polygon points="4,0 4,4 0,4" fill="#58585a"/></svg>
<svg style="left:615px;top:5px" width="24" height="18"><polygon points="1,1 1,9 3,7 7,7" fill="#8c8c8c"/><path d="M10 9 L15 7 L20 10 L21 14 L16 15 Z" fill="#666"/><path d="M8 9 L17 17" stroke="#aaa" stroke-width="1.3" stroke-dasharray="1.5 1"/></svg>
<svg style="left:634px;top:18px" width="5" height="5"><polygon points="4,0 4,4 0,4" fill="#58585a"/></svg>
<svg style="left:649px;top:5px" width="24" height="18"><polygon points="1,1 1,9 3,7 7,7" fill="#8c8c8c"/><path d="M12 9 L15 8 L15 13 L19 13 L18 4 Q22 5 21 9 L20 16 Q16 18 12 17 Z" fill="url(#gg)"/><path d="M9 9 L13 16" stroke="#222" stroke-width="1.5" stroke-dasharray="1.5 1"/></svg>
<svg style="left:667px;top:18px" width="5" height="5"><polygon points="4,0 4,4 0,4" fill="#58585a"/></svg>
<svg style="left:683px;top:5px" width="24" height="18"><polygon points="1,1 1,9 3,7 7,7" fill="#8c8c8c"/><circle cx="15" cy="11" r="4.5" fill="#a8a8a8"/><path d="M12 11 H18 M15 8 V14" stroke="#3c3c3e" stroke-width="0.9"/></svg>
<svg style="left:701px;top:18px" width="5" height="5"><polygon points="4,0 4,4 0,4" fill="#58585a"/></svg>
<svg style="left:740px;top:7px" width="10" height="14"><path d="M1 1 L5 7 L1 13 M5 1 L9 7 L5 13" stroke="#1e1e1e" stroke-width="1.1" fill="none"/></svg>
<div class="a" style="left:307px;top:44px;width:20px;height:20px;border:1px solid #505052;background:#3a3a3c"></div>
<div class="a" style="left:334px;top:44px;width:20px;height:20px;border:1px solid #505052;background:#3a3a3c"></div>
<div class="a" style="left:361px;top:44px;width:20px;height:20px;border:1px solid #505052;background:#3a3a3c"></div>
<div class="a" style="left:388px;top:44px;width:20px;height:20px;border:1px solid #505052;background:#3a3a3c"></div>
<div class="a" style="left:415px;top:44px;width:20px;height:20px;border:1px solid #6a6a6c;background:#3a3a3c"></div>
<div class="a" style="left:442px;top:44px;width:20px;height:20px;border:1px solid #505052;background:#3a3a3c"></div>
<div class="a" style="left:469px;top:44px;width:20px;height:20px;border:1px solid #6a6a6c;background:#3a3a3c"></div>
<div class="a" style="left:496px;top:44px;width:20px;height:20px;border:1px solid #505052;background:#3a3a3c"></div>
<svg style="left:307px;top:44px" width="20" height="20"><path d="M5 6 L10 3 L16 6 V13 L10 16 L5 13 Z" fill="#a0a0a0"/><path d="M5 6 L10 9 L16 6 L10 3 Z" fill="#d0d0d0"/><path d="M10 9 V16 L16 13 V6 Z" fill="#7a7a7a"/><rect x="1" y="12" width="9" height="7" fill="#555"/><path d="M3 14 L5 12 M6 14 L8 12" stroke="#eee" stroke-width="0.9"/><path d="M11 17 L18 13 L19 17 Z" fill="#111"/></svg>
<svg style="left:334px;top:44px" width="20" height="20"><path d="M4 4 L8 3 Q10 5 12 3 L16 4 L19 8 L16.5 10 V17 H7.5 V10 L5 11 L2 8 Z" fill="#d8d8d8"/><g transform="translate(1,14)"><ellipse cx="4" cy="2.8" rx="4" ry="2.3" fill="#111"/><ellipse cx="4" cy="2.8" rx="2.7" ry="1.4" fill="#fff"/><circle cx="4" cy="2.8" r="1.1" fill="#111"/></g></svg>
<svg style="left:361px;top:44px" width="20" height="20"><circle cx="14" cy="4" r="2" fill="#f0a800"/><circle cx="17" cy="8" r="2.2" fill="#f0a800"/><circle cx="15" cy="13" r="2.5" fill="#f0a800"/><circle cx="10" cy="15" r="2.3" fill="#f0a800"/><circle cx="6" cy="12" r="2" fill="#f0a800"/><circle cx="5" cy="7" r="2" fill="#f0a800"/><circle cx="9" cy="4" r="1.8" fill="#f0a800"/><rect x="2" y="16" width="3" height="3" fill="#f08000"/></svg>
<svg style="left:388px;top:44px" width="20" height="20"><circle cx="10.5" cy="6" r="3.5" fill="#e8e8e8"/><path d="M4 17 Q4 10 10.5 10 Q17 10 17 17 Z" fill="#d8d8d8"/><g transform="translate(1,14)"><ellipse cx="4" cy="2.8" rx="4" ry="2.3" fill="#111"/><ellipse cx="4" cy="2.8" rx="2.7" ry="1.4" fill="#fff"/><circle cx="4" cy="2.8" r="1.1" fill="#111"/></g></svg>
<svg style="left:415px;top:44px" width="20" height="20"><path d="M2 6 L9 5 L8 18 L3 17 Z" fill="#f0f0f0"/><path d="M6 5 L17 3 Q18 10 16 15 L6 17 Q8 11 6 5 Z" fill="url(#yg)"/><polygon points="19,15 19,19 15,19" fill="#111"/></svg>
<svg style="left:442px;top:44px" width="20" height="20"><path d="M3 6 Q9 8 16 4 Q15 10 15 14 Q10 16 5 15 Z" fill="#aaa"/><path d="M3 6 L7 8 L5 15 Z" fill="#333"/></svg>
<svg style="left:469px;top:44px" width="20" height="20"><circle cx="10.5" cy="7" r="4.2" fill="#fac090"/><path d="M3.5 19 Q3 12 10.5 12 Q18 12 17.5 19 Z" fill="#fac090"/><polygon points="19,15 19,19 15,19" fill="#111"/></svg>
<svg style="left:496px;top:44px" width="20" height="20"><circle cx="11" cy="9" r="6.5" fill="#f0a000"/><path d="M5 7 H17 M4.5 10 H17.5 M6 13 H16 M9 3 V15 M13 3 V15" stroke="#8a5000" stroke-width="0.8"/><g transform="translate(1,14)"><ellipse cx="4" cy="2.8" rx="4" ry="2.3" fill="#111"/><ellipse cx="4" cy="2.8" rx="2.7" ry="1.4" fill="#fff"/><circle cx="4" cy="2.8" r="1.1" fill="#111"/></g></svg>
<svg style="left:524px;top:45px" width="20" height="17"><path d="M10 0 L15 5 H12 V9 H8 V5 H5 Z" fill="#8a8a8a"/><path d="M1 8 V16 H19 V8 H16 V12 H4 V8 Z" fill="#8a8a8a"/><path d="M6 14 H7 M9 14 H11 M13 14 H14" stroke="#3a3a3c"/></svg>
<svg style="left:759px;top:33px" width="455" height="981"><rect x="21.2" y="0" width="1" height="981" fill="#bcbcbc"/><rect x="79.7" y="0" width="1" height="981" fill="#bcbcbc"/><rect x="138.2" y="0" width="1" height="981" fill="#bcbcbc"/><rect x="196.7" y="0" width="1" height="981" fill="#bcbcbc"/><rect x="255.2" y="0" width="1" height="981" fill="#bcbcbc"/><rect x="313.7" y="0" width="1" height="981" fill="#bcbcbc"/><rect x="372.2" y="0" width="1" height="981" fill="#bcbcbc"/><rect x="430.7" y="0" width="1" height="981" fill="#bcbcbc"/><rect x="0" y="33.2" width="455" height="1" fill="#bcbcbc"/><rect x="0" y="91.6" width="455" height="1" fill="#bcbcbc"/><rect x="0" y="150.0" width="455" height="1" fill="#bcbcbc"/><rect x="0" y="208.4" width="455" height="1" fill="#bcbcbc"/><rect x="0" y="266.8" width="455" height="1" fill="#bcbcbc"/><rect x="0" y="325.2" width="455" height="1" fill="#bcbcbc"/><rect x="0" y="383.7" width="455" height="1" fill="#bcbcbc"/><rect x="0" y="442.1" width="455" height="1" fill="#bcbcbc"/><rect x="0" y="500.5" width="455" height="1" fill="#bcbcbc"/><rect x="0" y="558.9" width="455" height="1" fill="#bcbcbc"/><rect x="0" y="617.3" width="455" height="1" fill="#bcbcbc"/><rect x="0" y="675.7" width="455" height="1" fill="#bcbcbc"/><rect x="0" y="734.1" width="455" height="1" fill="#bcbcbc"/><rect x="0" y="792.5" width="455" height="1" fill="#bcbcbc"/><rect x="0" y="850.9" width="455" height="1" fill="#bcbcbc"/><rect x="0" y="909.4" width="455" height="1" fill="#bcbcbc"/><rect x="0" y="967.8" width="455" height="1" fill="#bcbcbc"/></svg>
<div class="a" style="left:764px;top:3px;width:1px;height:24px;background:#2e2e30"></div>
<div class="a" style="left:770px;top:1px;width:29px;height:28px;border:1px solid #1c1c1e;border-radius:2px;background:linear-gradient(#4a4a4c,#404042)"></div>
<svg style="left:0px;top:0px" width="1" height="1"><defs><linearGradient id="gg" x1="0" y1="0" x2="0" y2="1"><stop offset="0" stop-color="#a8a8a8"/><stop offset="1" stop-color="#6a6a6a"/></linearGradient><linearGradient id="yg" x1="0" y1="0" x2="1" y2="1"><stop offset="0" stop-color="#ffe000"/><stop offset="1" stop-color="#f09000"/></linearGradient><linearGradient id="og" x1="0" y1="0" x2="0" y2="1"><stop offset="0" stop-color="#ffb000"/><stop offset="1" stop-color="#ffd000"/></linearGradient></defs></svg>
<svg style="left:773px;top:4px" width="24" height="22"><polygon points="2,2 2,9 4,7.5 7,7.5" fill="none" stroke="#888" stroke-width="0.8"/><polygon points="7,17 19,7 19,17" fill="url(#yg)"/></svg>
<svg style="left:805px;top:4px" width="24" height="20"><polygon points="2,2 2,10 4,8 8,8" fill="#8c8c8c"/><path d="M6 15.5 L15 15.5 L15 6.5 Z" stroke="#8a8a8a" stroke-width="0.8" fill="none"/><circle cx="6" cy="15.5" r="1.6" fill="#bbb"/><circle cx="15" cy="15.5" r="1.6" fill="#bbb"/><circle cx="15" cy="6.5" r="1.6" fill="#bbb"/></svg>
<svg style="left:824px;top:18px" width="5" height="5"><polygon points="4,0 4,4 0,4" fill="#58585a"/></svg>
<svg style="left:843px;top:7px" width="18" height="14"><path d="M0.5 0.5 H9 Q12 3 16.5 6 V13.5 H0.5 Z" fill="url(#gg)"/></svg>
<svg style="left:858px;top:18px" width="5" height="5"><polygon points="4,0 4,4 0,4" fill="#58585a"/></svg>
<svg style="left:877px;top:6px" width="18" height="15"><rect x="0" y="0" width="18" height="15" fill="#6c6c6c"/><path d="M3 3 H9 L11 6 H15 V12 H3 Z" stroke="#d8d8d8" stroke-width="1.2" fill="none"/></svg>
<svg style="left:892px;top:18px" width="5" height="5"><polygon points="4,0 4,4 0,4" fill="#58585a"/></svg>
<svg style="left:912px;top:5px" width="18" height="17"><circle cx="6.5" cy="2.5" r="2" fill="#888"/><path d="M4 5 H9 V16 H4 Z M1 10 L4 6 M9 6 L12 9" stroke="#8a8a8a" stroke-width="1.5" fill="#8a8a8a"/><path d="M9 6 H13 V13 H9 Z" fill="#aaa"/><circle cx="14" cy="5" r="2" fill="#888"/></svg>
<svg style="left:942px;top:5px" width="24" height="18"><polygon points="1,1 1,9 3,7 7,7" fill="#8c8c8c"/><path d="M9.5 6 H19.5 Q20.7 6 20.7 7.5 V16 H8 V14 H16 V9.5 H12.5 V12.5 H11 L9.5 10.5 Z" fill="url(#gg)"/><rect x="12" y="2" width="1.2" height="4" fill="#999"/></svg>
<svg style="left:962px;top:18px" width="5" height="5"><polygon points="4,0 4,4 0,4" fill="#58585a"/></svg>
<svg style="left:976px;top:5px" width="26" height="18"><polygon points="1,1 1,9 3,7 7,7" fill="#8c8c8c"/><path d="M9 7 L23 7 L20 17 L6 17 Z" stroke="#aaa" stroke-width="1" fill="#666" stroke-dasharray="2 1"/><path d="M8 10.5 H22 M7 14 H21 M12.5 7 L10 17 M17 7 L14.5 17" stroke="#bbb" stroke-width="0.9"/></svg>
<svg style="left:996px;top:18px" width="5" height="5"><polygon points="4,0 4,4 0,4" fill="#58585a"/></svg>
<svg style="left:1012px;top:8px" width="20" height="14"><path d="M1 13 Q3 6 9 4 Q12 0 16 2 Q19 5 19 13 Z" fill="url(#gg)"/></svg>
<svg style="left:1044px;top:5px" width="22" height="18"><polygon points="1,1 1,9 3,7 7,7" fill="#8c8c8c"/><path d="M9 7 L12 6 Q14 8 16 6 L19 7 L21 11 L19 12 L18 11 V17 H10 V11 L9 12 L7 11 Z" fill="url(#gg)"/><path d="M12 6 Q14 9 16 6" stroke="#ddd" fill="none"/></svg>
<svg style="left:1078px;top:5px" width="22" height="18"><polygon points="1,1 1,9 3,7 7,7" fill="#8c8c8c"/><path d="M10 8 L14 7 L14 13 L19 13 L18 4 Q21 5 21 8 L20 16 Q16 18 12 17 Z" fill="url(#gg)"/><path d="M8 9 L13 16" stroke="#222" stroke-width="1.5" stroke-dasharray="1.5 1"/></svg>
<svg style="left:1113px;top:6px" width="22" height="16"><path d="M1 1 L6 3 V15 L1 13 Z M7 3 L11 1 V13 L7 15 Z M12 1 L16 3 V15 L12 13 Z M17 3 L21 1 V13 L17 15 Z" fill="url(#gg)"/></svg>
<svg style="left:1133px;top:18px" width="5" height="5"><polygon points="4,0 4,4 0,4" fill="#58585a"/></svg>
<svg style="left:1146px;top:5px" width="24" height="18"><polygon points="1,1 1,9 3,7 7,7" fill="#8c8c8c"/><path d="M7 16 L20 4" stroke="#ddd" stroke-width="2" stroke-dasharray="2 1.5"/></svg>
<svg style="left:1165px;top:18px" width="5" height="5"><polygon points="4,0 4,4 0,4" fill="#58585a"/></svg>
<svg style="left:1182px;top:6px" width="20" height="16"><path d="M6 1 L8 0.5 Q10 3 12 0.5 L14 1 L19.5 4 L17 8 L15 7 V15 H5 V7 L3 8 L0.5 4 Z" fill="#757575"/></svg>
<div class="a" style="left:769px;top:43px;width:22px;height:22px;border:1px solid #b2b2b2;border-radius:1px;background:#d4d4d4"></div>
<div class="a" style="left:796px;top:43px;width:22px;height:22px;border:1px solid #b2b2b2;border-radius:1px;background:#d4d4d4"></div>
<div class="a" style="left:823px;top:43px;width:22px;height:22px;border:1px solid #b2b2b2;border-radius:1px;background:#d4d4d4"></div>
<div class="a" style="left:850px;top:43px;width:22px;height:22px;border:1px solid #8e8e8e;border-radius:1px;background:#d4d4d4"></div>
<div class="a" style="left:877px;top:43px;width:22px;height:22px;border:1px solid #b2b2b2;border-radius:1px;background:#d4d4d4"></div>
<svg style="left:769px;top:43px" width="22" height="22"><path d="M5 15 Q3 9 6 5" stroke="#e89a20" stroke-width="0.9" fill="none"/><path d="M6 4.5 L18 15" stroke="#222" stroke-width="2.2"/><g transform="translate(2,15)"><ellipse cx="4.5" cy="3" rx="4.5" ry="2.6" fill="#111"/><ellipse cx="4.5" cy="3" rx="3" ry="1.6" fill="#fff"/><circle cx="4.5" cy="3" r="1.3" fill="#111"/></g></svg>
<svg style="left:796px;top:43px" width="22" height="22"><path d="M6 4 L9 3 Q11 5 13 3 L16 4 L20 8 L18 10 L16.5 9 V18 H8.5 V9 L7 10 L4 8 Z" fill="#f4f4f4" stroke="#ccc" stroke-width="0.5"/><g transform="translate(2,15)"><ellipse cx="4.5" cy="3" rx="4.5" ry="2.6" fill="#111"/><ellipse cx="4.5" cy="3" rx="3" ry="1.6" fill="#fff"/><circle cx="4.5" cy="3" r="1.3" fill="#111"/></g></svg>
<svg style="left:823px;top:43px" width="22" height="22"><circle cx="12.5" cy="10" r="7" fill="#333"/><path d="M12.5 5.5 V6.5 M11.5 8.5 H13 V14 M11 14 H14" stroke="#f5a800" stroke-width="1.8"/><g transform="translate(2,15)"><ellipse cx="4.5" cy="3" rx="4.5" ry="2.6" fill="#111"/><ellipse cx="4.5" cy="3" rx="3" ry="1.6" fill="#fff"/><circle cx="4.5" cy="3" r="1.3" fill="#111"/></g></svg>
<svg style="left:850px;top:43px" width="22" height="22"><path d="M3 6 L10 5 L9 18 L4 17 Z" fill="#f0f0f0" stroke="#aaa" stroke-width="0.6"/><path d="M7 5 L18 3 Q19 10 17 16 L7 18 Q9 11 7 5 Z" fill="url(#yg)"/></svg>
<svg style="left:877px;top:43px" width="22" height="22"><path d="M5 5 L9 4 Q11 6 13 4 L17 5 L20 10 L17.5 11 V19 H8 V11 L5.5 12 L3 9 Z" fill="#8a8a8a"/><rect x="3" y="13" width="6" height="6" fill="#444"/><path d="M4 13 V11 Q6 9 8 11 V13" stroke="#444" fill="none" stroke-width="1.2"/></svg>
<svg style="left:904px;top:44px" width="22" height="20"><path d="M11 1 L16 6 H13 V10 H9 V6 H6 Z" fill="#8e8e8e"/><path d="M2 9 V17 H20 V9 H17 V13 H5 V9 Z" fill="#8e8e8e"/><path d="M7 15 H8 M10 15 H12 M14 15 H15" stroke="#c8c8c8"/></svg>
<div class="a" style="left:1578px;top:0px;width:6px;height:1014px;background:#2e2e30"></div>
<div class="a" style="left:1230px;top:8px;width:72px;height:27px;border:1px solid #6a6a6c;border-radius:2px;background:#39393b"></div>
<div class="t" style="left:1230.0px;top:16px;width:72px;text-align:center;color:#d2d2d2;font-size:11px;">Add</div>
<div class="a" style="left:1312px;top:8px;width:72px;height:27px;border:1px solid #6a6a6c;border-radius:2px;background:#39393b"></div>
<div class="t" style="left:1312.0px;top:16px;width:72px;text-align:center;color:#58585a;font-size:11px;">Copy</div>
<div class="a" style="left:1394px;top:8px;width:72px;height:27px;border:1px solid #6a6a6c;border-radius:2px;background:#39393b"></div>
<div class="t" style="left:1394.0px;top:16px;width:72px;text-align:center;color:#d2d2d2;font-size:11px;">Assign</div>
<div class="a" style="left:1476px;top:8px;width:92px;height:27px;border:1px solid #6a6a6c;border-radius:2px;background:#39393b"></div>
<div class="t" style="left:1476.0px;top:16px;width:92px;text-align:center;color:#d2d2d2;font-size:11px;">Delete Unused</div>
<div class="a" style="left:1230px;top:45px;width:338px;height:277px;background:#2c2c2e"></div>
<svg style="left:1254px;top:74px" width="16" height="14"><path d="M3 6.5 L6.5 10 L12.5 3.5" stroke="#f2c200" stroke-width="2.6" fill="none"/></svg>
<div class="a" style="left:1285px;top:64px;width:35px;height:35px;background:#e8e8e8"></div>
<div class="t" style="left:1330px;top:76px;color:#c8c8c8;font-size:11px;">BASIC_FABRIC</div>
<svg style="left:1512px;top:73px" width="17" height="17"><rect x="0.5" y="0.5" width="15" height="15" fill="#303032" stroke="#1c1c1e"/><path d="M3.5 5 H5.5 V9 H10.5 V5 H12.5 V12.5 H3.5 Z" fill="#8c8c8c"/><path d="M6.5 3 H9.5 V6 H11 L8 9 L5 6 H6.5 Z" fill="#9a9a9a"/></svg>
<div class="a" style="left:1240px;top:109px;width:300px;height:1px;background:#3a3a3c"></div>
<div class="a" style="left:1285px;top:119px;width:35px;height:35px;background:#dcc0d8"></div>
<div class="t" style="left:1330px;top:131px;color:#c8c8c8;font-size:11px;">Shirt</div>
<svg style="left:1512px;top:128px" width="17" height="17"><rect x="0.5" y="0.5" width="15" height="15" fill="#303032" stroke="#1c1c1e"/><path d="M3.5 5 H5.5 V9 H10.5 V5 H12.5 V12.5 H3.5 Z" fill="#8c8c8c"/><path d="M6.5 3 H9.5 V6 H11 L8 9 L5 6 H6.5 Z" fill="#9a9a9a"/></svg>
<div class="a" style="left:1240px;top:164px;width:300px;height:1px;background:#3a3a3c"></div>
<div class="a" style="left:1285px;top:174px;width:35px;height:35px;background:#b994b4"></div>
<div class="t" style="left:1330px;top:186px;color:#c8c8c8;font-size:11px;">Tie Knot</div>
<svg style="left:1512px;top:183px" width="17" height="17"><rect x="0.5" y="0.5" width="15" height="15" fill="#303032" stroke="#1c1c1e"/><path d="M3.5 5 H5.5 V9 H10.5 V5 H12.5 V12.5 H3.5 Z" fill="#8c8c8c"/><path d="M6.5 3 H9.5 V6 H11 L8 9 L5 6 H6.5 Z" fill="#9a9a9a"/></svg>
<div class="a" style="left:1240px;top:219px;width:300px;height:1px;background:#3a3a3c"></div>
<svg style="left:1285px;top:229px" width="35" height="35"><filter id="swn" filterUnits="userSpaceOnUse" x="0" y="0" width="35" height="35"><feTurbulence type="fractalNoise" baseFrequency="0.9" numOctaves="2" seed="7"/><feColorMatrix values="0 0 0 0 0.25  0 0 0 0 0.25  0 0 0 0 0.25  0 0 0 0.9 -0.2"/></filter><rect width="35" height="35" fill="#545454"/><rect width="35" height="35" filter="url(#swn)"/></svg>
<div class="t" style="left:1330px;top:241px;color:#c8c8c8;font-size:11px;">Vest</div>
<svg style="left:1512px;top:238px" width="17" height="17"><rect x="0.5" y="0.5" width="15" height="15" fill="#303032" stroke="#1c1c1e"/><path d="M3.5 5 H5.5 V9 H10.5 V5 H12.5 V12.5 H3.5 Z" fill="#8c8c8c"/><path d="M6.5 3 H9.5 V6 H11 L8 9 L5 6 H6.5 Z" fill="#9a9a9a"/></svg>
<div class="a" style="left:1240px;top:274px;width:300px;height:1px;background:#3a3a3c"></div>
<div class="a" style="left:1285px;top:284px;width:35px;height:28px;background:#72716f"></div>
<div class="t" style="left:1330px;top:296px;color:#eba21d;font-size:11px;">Jacket</div>
<svg style="left:1512px;top:293px" width="17" height="17"><rect x="0.5" y="0.5" width="15" height="15" fill="#303032" stroke="#1c1c1e"/><path d="M3.5 5 H5.5 V9 H10.5 V5 H12.5 V12.5 H3.5 Z" fill="#8c8c8c"/><path d="M6.5 3 H9.5 V6 H11 L8 9 L5 6 H6.5 Z" fill="#9a9a9a"/></svg>
<div class="a" style="left:1540px;top:55px;width:18px;height:18px;border:1px solid #1e1e20;border-radius:4px;background:#333335"></div>
<svg style="left:1540px;top:55px" width="18" height="18"><polygon points="5.5,11 12.5,11 9,6" fill="#1c1c1c"/></svg>
<div class="a" style="left:1540px;top:73px;width:18px;height:222px;border:1px solid #1e1e20;border-radius:4px;background:#333335"></div>
<div class="a" style="left:1541px;top:220px;width:16px;height:74px;background:#232325;border-radius:3px"></div>
<svg style="left:1540px;top:142px" width="18" height="10"><path d="M7 2.5 H11 M7 4.5 H11 M7 6.5 H11" stroke="#9a9a9a" stroke-width="0.8"/></svg>
<div class="a" style="left:1540px;top:295px;width:18px;height:17px;border:1px solid #1e1e20;border-radius:4px;background:#333335"></div>
<svg style="left:1540px;top:295px" width="18" height="17"><polygon points="5.5,6.5 12.5,6.5 9,11" fill="#1c1c1c"/></svg>
<div class="a" style="left:1220px;top:336px;width:358px;height:22px;background:#2b2b2d"></div>
<svg style="left:1220px;top:340px" width="16" height="14"><path d="M2 6.5 H7" stroke="#a8a8a8" stroke-width="3"/><polygon points="6,2.5 10.5,6.5 6,10.5" fill="#a8a8a8"/><rect x="13" y="0" width="1" height="12" fill="#111"/></svg>
<div class="t" style="left:1325.0px;top:341px;width:120px;text-align:center;color:#d0d0d0;font-size:11px;">Property Editor</div>
<div class="a" style="left:1452px;top:340px;width:15px;height:14px;border:1px solid #1e1e20;border-radius:2px;background:#333335"></div>
<svg style="left:1452px;top:340px" width="15" height="14"><polygon points="4.5,5.5 10.5,5.5 7.5,9.5" fill="#a8a8a8"/></svg>
<svg style="left:1547px;top:340px" width="30" height="14"><rect x="0.5" y="0.5" width="13" height="13" fill="#303032" stroke="#262628"/><rect x="15.5" y="0.5" width="13" height="13" fill="#303032" stroke="#262628"/><path d="M3 5 V11 H9 V8 M6 3 H11 V8 M11 3 L6.5 7.5" stroke="#9a9a9a" stroke-width="1" fill="none"/><path d="M18.5 3.5 L25.5 10.5 M25.5 3.5 L18.5 10.5" stroke="#9a9a9a" stroke-width="1.3"/></svg>
<div class="a" style="left:1220px;top:358px;width:358px;height:656px;background:#3f3f41"></div>
<svg style="left:1232px;top:376px" width="10" height="8"><polygon points="1,2 9,2 5,6" fill="#8a8a8a"/></svg>
<div class="t" style="left:1249px;top:374px;color:#eba21d;font-size:11px;">Information</div>
<div class="a" style="left:1242px;top:391px;width:301px;height:1px;background:#343436"></div>
<div class="t" style="left:1254px;top:398px;color:#c8c8c8;font-size:11px;">Name</div>
<div class="a" style="left:1416px;top:395px;width:127px;height:19px;background:#38383a;border-top:1px solid #4e4e50;border-left:1px solid #4a4a4c;border-right:1px solid #464648"></div>
<div class="t" style="left:1422px;top:399px;color:#d2d2d2;font-size:11px;">Pattern2D_59794</div>
<div class="a" style="left:1230px;top:415px;width:323px;height:1px;background:#343436"></div>
<svg style="left:1232px;top:424px" width="10" height="8"><polygon points="1,2 9,2 5,6" fill="#8a8a8a"/></svg>
<div class="t" style="left:1249px;top:422px;color:#eba21d;font-size:11px;">Selected Line</div>
<div class="a" style="left:1242px;top:439px;width:301px;height:1px;background:#343436"></div>
<div class="t" style="left:1254px;top:446px;color:#c8c8c8;font-size:11px;">2D Line Length</div>
<div class="a" style="left:1449px;top:443px;width:94px;height:19px;background:#38383a;border-top:1px solid #4e4e50;border-left:1px solid #4a4a4c;border-right:1px solid #464648"></div>
<div class="t" style="left:1455px;top:447px;color:#707070;font-size:11px;">1853.0mm</div>
<div class="a" style="left:1242px;top:463px;width:301px;height:1px;background:#343436"></div>
<div class="t" style="left:1260px;top:470px;color:#c8c8c8;font-size:11px;">+ Symmetric Line Length</div>
<div class="a" style="left:1449px;top:467px;width:94px;height:19px;background:#38383a;border-top:1px solid #4e4e50;border-left:1px solid #4a4a4c;border-right:1px solid #464648"></div>
<div class="t" style="left:1455px;top:471px;color:#707070;font-size:11px;">3705.9mm</div>
<div class="a" style="left:1242px;top:487px;width:301px;height:1px;background:#343436"></div>
<div class="t" style="left:1254px;top:494px;color:#c8c8c8;font-size:11px;">3D Line Length</div>
<div class="a" style="left:1449px;top:491px;width:94px;height:19px;background:#38383a;border-top:1px solid #4e4e50;border-left:1px solid #4a4a4c;border-right:1px solid #464648"></div>
<div class="t" style="left:1455px;top:495px;color:#707070;font-size:11px;">1907.6mm</div>
<div class="a" style="left:1242px;top:511px;width:301px;height:1px;background:#343436"></div>
<div class="t" style="left:1260px;top:518px;color:#c8c8c8;font-size:11px;">+ Symmetric Line Length</div>
<div class="a" style="left:1449px;top:515px;width:94px;height:19px;background:#38383a;border-top:1px solid #4e4e50;border-left:1px solid #4a4a4c;border-right:1px solid #464648"></div>
<div class="t" style="left:1455px;top:519px;color:#707070;font-size:11px;">3823.4mm</div>
<div class="a" style="left:1242px;top:535px;width:301px;height:1px;background:#343436"></div>
<div class="t" style="left:1254px;top:542px;color:#c8c8c8;font-size:11px;">Elastic</div>
<div class="a" style="left:1530px;top:542px;width:13px;height:13px;border:1px solid #8a8a8c;border-radius:2px"></div>
<div class="a" style="left:1242px;top:559px;width:301px;height:1px;background:#343436"></div>
<div class="t" style="left:1254px;top:566px;color:#c8c8c8;font-size:11px;">Seam Taping</div>
<div class="a" style="left:1530px;top:566px;width:13px;height:13px;border:1px solid #8a8a8c;border-radius:2px"></div>
<div class="a" style="left:1242px;top:583px;width:301px;height:1px;background:#343436"></div>
<div class="t" style="left:1254px;top:590px;color:#c8c8c8;font-size:11px;">Curved Side Geometry</div>
<div class="a" style="left:1530px;top:590px;width:13px;height:13px;border:1px solid #8a8a8c;border-radius:2px"></div>
<div class="a" style="left:1230px;top:607px;width:323px;height:1px;background:#343436"></div>
<svg style="left:1232px;top:616px" width="10" height="8"><polygon points="1,2 9,2 5,6" fill="#8a8a8a"/></svg>
<div class="t" style="left:1249px;top:614px;color:#eba21d;font-size:11px;">Simulation Properties</div>
<div class="a" style="left:1242px;top:631px;width:301px;height:1px;background:#343436"></div>
<div class="t" style="left:1254px;top:638px;color:#c8c8c8;font-size:11px;">Particle Distance (mm)</div>
<div class="a" style="left:1449px;top:635px;width:94px;height:19px;background:#38383a;border-top:1px solid #4e4e50;border-left:1px solid #4a4a4c;border-right:1px solid #464648"></div>
<div class="t" style="left:1455px;top:639px;color:#d2d2d2;font-size:11px;">10.0</div>
<div class="a" style="left:1242px;top:655px;width:301px;height:1px;background:#343436"></div>
<div class="t" style="left:1254px;top:662px;color:#c8c8c8;font-size:11px;">Layer</div>
<div class="a" style="left:1449px;top:659px;width:94px;height:19px;background:#38383a;border-top:1px solid #4e4e50;border-left:1px solid #4a4a4c;border-right:1px solid #464648"></div>
<div class="t" style="left:1455px;top:663px;color:#d2d2d2;font-size:11px;">0</div>
<div class="a" style="left:1242px;top:680px;width:301px;height:1px;background:#343436"></div>
<div class="t" style="left:1254px;top:686px;color:#c8c8c8;font-size:11px;">Shrinkage Weft (%)</div>
<div class="a" style="left:1449px;top:683px;width:94px;height:19px;background:#38383a;border-top:1px solid #4e4e50;border-left:1px solid #4a4a4c;border-right:1px solid #464648"></div>
<div class="t" style="left:1455px;top:687px;color:#d2d2d2;font-size:11px;">100.00</div>
<div class="a" style="left:1242px;top:704px;width:301px;height:1px;background:#343436"></div>
<div class="t" style="left:1254px;top:710px;color:#c8c8c8;font-size:11px;">Shrinkage Warp (%)</div>
<div class="a" style="left:1449px;top:707px;width:94px;height:19px;background:#38383a;border-top:1px solid #4e4e50;border-left:1px solid #4a4a4c;border-right:1px solid #464648"></div>
<div class="t" style="left:1455px;top:711px;color:#d2d2d2;font-size:11px;">100.00</div>
<div class="a" style="left:1242px;top:728px;width:301px;height:1px;background:#343436"></div>
<div class="t" style="left:1254px;top:735px;color:#c8c8c8;font-size:11px;">Add'l Thickness - Collision (mm)</div>
<div class="a" style="left:1449px;top:732px;width:94px;height:19px;background:#38383a;border-top:1px solid #4e4e50;border-left:1px solid #4a4a4c;border-right:1px solid #464648"></div>
<div class="t" style="left:1455px;top:736px;color:#d2d2d2;font-size:11px;">2.5</div>
<div class="a" style="left:1242px;top:753px;width:301px;height:1px;background:#343436"></div>
<div class="t" style="left:1254px;top:759px;color:#c8c8c8;font-size:11px;">Add'l Thickness - Rendering (mm)</div>
<div class="a" style="left:1452px;top:756px;width:91px;height:19px;background:#38383a;border-top:1px solid #4e4e50;border-left:1px solid #4a4a4c;border-right:1px solid #464648"></div>
<div class="t" style="left:1458px;top:760px;color:#d2d2d2;font-size:11px;">0.5</div>
<div class="a" style="left:1242px;top:777px;width:301px;height:1px;background:#343436"></div>
<svg style="left:1246px;top:793px" width="8" height="10"><polygon points="2,1 6,5 2,9" fill="#8a8a8a"/></svg>
<div class="t" style="left:1261px;top:792px;color:#c8c8c8;font-size:11px;">Pressure</div>
<div class="a" style="left:1449px;top:780px;width:94px;height:19px;background:#38383a;border-top:1px solid #4e4e50;border-left:1px solid #4a4a4c;border-right:1px solid #464648"></div>
<div class="t" style="left:1455px;top:784px;color:#d2d2d2;font-size:11px;">0</div>
<div class="a" style="left:1453px;top:806px;width:45px;height:3px;background:#f0c000"></div>
<div class="a" style="left:1498px;top:807px;width:45px;height:1px;background:#222224"></div>
<svg style="left:1493px;top:800px" width="10" height="14"><path d="M2 3 L5 0.5 L8 3 V12 H2 Z" fill="#d8d8d8" stroke="#555" stroke-width="0.8"/></svg>
<div class="a" style="left:1230px;top:819px;width:323px;height:1px;background:#343436"></div>
<svg style="left:1232px;top:828px" width="10" height="8"><polygon points="1,2 9,2 5,6" fill="#8a8a8a"/></svg>
<div class="t" style="left:1249px;top:826px;color:#eba21d;font-size:11px;">Fabric</div>
<div class="a" style="left:1242px;top:843px;width:301px;height:1px;background:#343436"></div>
<div class="t" style="left:1254px;top:850px;color:#c8c8c8;font-size:11px;">Fabric</div>
<div class="a" style="left:1420px;top:846px;width:123px;height:19px;background:#38383a;border-top:1px solid #4e4e50;border-left:1px solid #4a4a4c"></div>
<div class="a" style="left:1425px;top:848px;width:10px;height:16px;background:#727272"></div>
<div class="t" style="left:1442px;top:850px;color:#d2d2d2;font-size:11px;">Jacket</div>
<div class="a" style="left:1527px;top:849px;width:15px;height:15px;background:#2c2c2e;border:1px solid #1e1e20;border-radius:3px"></div>
<svg style="left:1527px;top:849px" width="15" height="15"><polygon points="4.5,6 10.5,6 7.5,10" fill="#a8a8a8"/></svg>
<div class="a" style="left:1242px;top:867px;width:301px;height:1px;background:#343436"></div>
<div class="t" style="left:1254px;top:874px;color:#c8c8c8;font-size:11px;">Grain Direction</div>
<div class="a" style="left:1449px;top:871px;width:94px;height:19px;background:#38383a;border-top:1px solid #4e4e50;border-left:1px solid #4a4a4c;border-right:1px solid #464648"></div>
<div class="t" style="left:1455px;top:875px;color:#d2d2d2;font-size:11px;">0.0</div>
<div class="a" style="left:1230px;top:891px;width:323px;height:1px;background:#343436"></div>
<svg style="left:1234px;top:899px" width="8" height="10"><polygon points="2,1 6,5 2,9" fill="#8a8a8a"/></svg>
<div class="t" style="left:1249px;top:898px;color:#eba21d;font-size:11px;">Bond/Skive</div>
<div class="a" style="left:1230px;top:915px;width:323px;height:1px;background:#343436"></div>
<div class="t" style="left:1242px;top:922px;color:#eba21d;font-size:11px;">Solidify</div>
<div class="a" style="left:1530px;top:923px;width:13px;height:13px;border:1px solid #8a8a8c;border-radius:2px"></div>
<div class="a" style="left:1230px;top:939px;width:323px;height:1px;background:#343436"></div>
<svg style="left:1232px;top:948px" width="10" height="8"><polygon points="1,2 9,2 5,6" fill="#8a8a8a"/></svg>
<div class="t" style="left:1249px;top:946px;color:#eba21d;font-size:11px;">Arrangement</div>
<div class="a" style="left:1242px;top:963px;width:301px;height:1px;background:#343436"></div>
<div class="t" style="left:1254px;top:970px;color:#c8c8c8;font-size:11px;">Point Name</div>
<div class="a" style="left:1414px;top:966px;width:129px;height:19px;background:#38383a;border-top:1px solid #4e4e50;border-left:1px solid #4a4a4c"></div>
<div class="t" style="left:1419px;top:970px;color:#d2d2d2;font-size:11px;">not assigned</div>
<div class="a" style="left:1527px;top:969px;width:15px;height:15px;background:#2c2c2e;border:1px solid #1e1e20;border-radius:3px"></div>
<svg style="left:1527px;top:969px" width="15" height="15"><polygon points="4.5,6 10.5,6 7.5,10" fill="#a8a8a8"/></svg>
<div class="a" style="left:1230px;top:987px;width:323px;height:1px;background:#343436"></div>
<svg style="left:1234px;top:995px" width="8" height="10"><polygon points="2,1 6,5 2,9" fill="#8a8a8a"/></svg>
<div class="t" style="left:1249px;top:994px;color:#eba21d;font-size:11px;">Miscellaneous</div>
<div class="a" style="left:1230px;top:1012px;width:323px;height:1px;background:#343436"></div>
</body></html>
